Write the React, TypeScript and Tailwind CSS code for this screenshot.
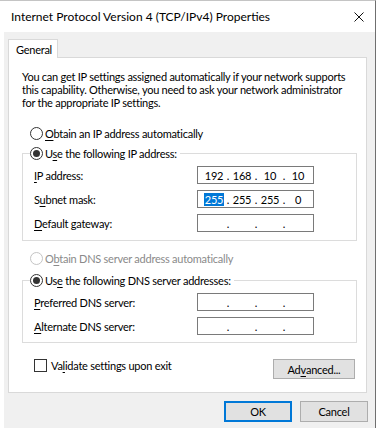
import React from "react";

function Radio({ checked, disabled }: { checked?: boolean; disabled?: boolean }) {
  return (
    <span
      className={`flex h-[13px] w-[13px] shrink-0 items-center justify-center rounded-full border bg-white ${
        disabled ? "border-[#c4c4c4]" : "border-[#333333]"
      }`}
    >
      {checked ? <span className="h-[7px] w-[7px] rounded-full bg-[#333333]" /> : null}
    </span>
  );
}

function Key({ children }: { children: React.ReactNode }) {
  return <span className="underline decoration-1 underline-offset-[2px]">{children}</span>;
}

function IpBox({ parts, selectFirst }: { parts: string[]; selectFirst?: boolean }) {
  return (
    <div className="flex h-[18px] w-[117px] items-center border border-[#7a7a7a] bg-white pl-[5px]">
      {parts.map((p, i) => (
        <React.Fragment key={i}>
          {i > 0 ? <span className="w-[6px] text-center">.</span> : null}
          <span className="flex w-[22px] justify-center">
            {selectFirst && i === 0 ? (
              <span className="bg-[#0078d7] px-[1px] text-white">{p}</span>
            ) : (
              p
            )}
          </span>
        </React.Fragment>
      ))}
    </div>
  );
}

function Row({ label, parts, selectFirst }: { label: React.ReactNode; parts: string[]; selectFirst?: boolean }) {
  return (
    <div className="flex items-center pl-[4px]">
      <span className="w-[163px]">{label}</span>
      <IpBox parts={parts} selectFirst={selectFirst} />
    </div>
  );
}

const empty = ["", "", "", ""];

export default function App() {
  return (
    <div className="h-[437px] w-[385px] bg-white font-[Lato,sans-serif] text-[11px] leading-[13px] tracking-[-0.25px] text-black">
      <div className="w-[376px] border-r border-t border-r-[#6f6f6f] border-t-[#c4c4c4]">
        <div className="flex h-[31px] items-center justify-between pl-[11px] pr-[10px] text-[12px] tracking-normal">
          <span>Internet Protocol Version 4 (TCP/IPv4) Properties</span>
          <svg width="10" height="10" viewBox="0 0 10 10" className="mr-[1px]">
            <path d="M0.5 0.5 L9.5 9.5 M9.5 0.5 L0.5 9.5" stroke="#111" strokeWidth="1" fill="none" />
          </svg>
        </div>

        <div className="ml-[4px] h-[396px] bg-[#f0f0f0] pt-[7px]">
          <div className="relative z-10 -mb-px ml-[4px] flex h-[19px] w-[50px] items-center border-l border-r border-t border-[#d9d9d9] bg-white pl-[7px]">
            General
          </div>

          <div className="ml-[4px] h-[336px] w-[359px] border border-[#d9d9d9] bg-white">
            <p className="pl-[13px] pt-[12px]">
              You can get IP settings assigned automatically if your network supports
              <br />
              this capability. Otherwise, you need to ask your network administrator
              <br />
              for the appropriate IP settings.
            </p>

            <div className="mt-[17px] flex h-[14px] items-center gap-[2px] pl-[21px]">
              <Radio />
              <span>
                <Key>O</Key>btain an IP address automatically
              </span>
            </div>

            <fieldset className="ml-[13px] mt-[6px] w-[335px] border border-[#dcdcdc] pb-[8px] pl-[7px] pt-[6px]">
              <legend className="flex h-[14px] items-center gap-[2px] pr-[3px]">
                <Radio checked />
                <span>
                  U<Key>s</Key>e the following IP address:
                </span>
              </legend>
              <div className="flex flex-col gap-[6px]">
                <Row
                  label={
                    <>
                      <Key>I</Key>P address:
                    </>
                  }
                  parts={["192", "168", "10", "10"]}
                />
                <Row
                  label={
                    <>
                      S<Key>u</Key>bnet mask:
                    </>
                  }
                  parts={["255", "255", "255", "0"]}
                  selectFirst
                />
                <Row
                  label={
                    <>
                      <Key>D</Key>efault gateway:
                    </>
                  }
                  parts={empty}
                />
              </div>
            </fieldset>

            <div className="mt-[10px] flex h-[14px] items-center gap-[2px] pl-[21px] text-[#8a8a8a]">
              <Radio disabled />
              <span>
                O<Key>b</Key>tain DNS server address automatically
              </span>
            </div>

            <fieldset className="ml-[13px] mt-[8px] w-[335px] border border-[#dcdcdc] pb-[7px] pl-[7px] pt-[6px]">
              <legend className="flex h-[14px] items-center gap-[2px] pr-[3px]">
                <Radio checked />
                <span>
                  Us<Key>e</Key> the following DNS server addresses:
                </span>
              </legend>
              <div className="flex flex-col gap-[6px]">
                <Row
                  label={
                    <>
                      <Key>P</Key>referred DNS server:
                    </>
                  }
                  parts={empty}
                />
                <Row
                  label={
                    <>
                      <Key>A</Key>lternate DNS server:
                    </>
                  }
                  parts={empty}
                />
              </div>
            </fieldset>

            <div className="mt-[15px] flex items-start justify-between pl-[25px] pr-[11px]">
              <div className="flex h-[14px] items-center gap-[4px]">
                <span className="h-[13px] w-[13px] border border-[#333333] bg-white" />
                <span>
                  Va<Key>l</Key>idate settings upon exit
                </span>
              </div>
              <button className="mt-[1px] flex h-[20px] w-[82px] items-center justify-center border border-[#adadad] bg-[#e1e1e1]">
                Ad<Key>v</Key>anced...
              </button>
            </div>
          </div>

          <div className="mt-[8px] flex justify-end gap-[8px] pr-[7px]">
            <button className="flex h-[21px] w-[68px] items-center justify-center border-2 border-[#0078d7] bg-[#e1e1e1]">
              OK
            </button>
            <button className="flex h-[21px] w-[68px] items-center justify-center border border-[#adadad] bg-[#e1e1e1]">
              Cancel
            </button>
          </div>
        </div>
      </div>
    </div>
  );
}
